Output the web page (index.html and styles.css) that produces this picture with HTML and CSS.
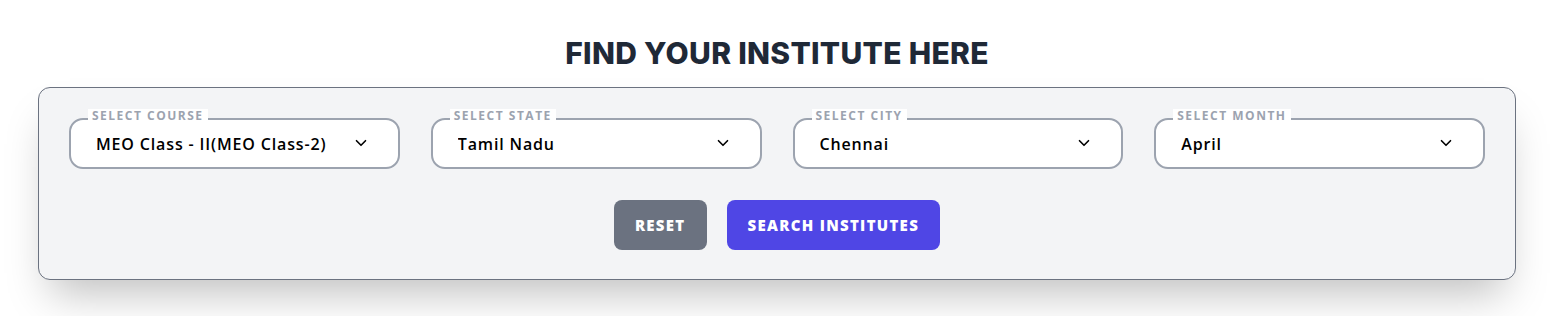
FILE: index.html
```html
<!DOCTYPE html>
<html lang="en">
<head>
    <meta charset="UTF-8">
    <meta name="viewport" content="width=device-width, initial-scale=1.0">
    <title>Find Your Institute</title>
    <link rel="stylesheet" href="styles.css">
</head>
<body>
    <div class="page">
        <h1>FIND YOUR INSTITUTE HERE</h1>
        <form class="search-box" onsubmit="return false;">
            <div class="fields">
                <div class="field">
                    <label for="course">SELECT COURSE</label>
                    <select id="course">
                        <option>MEO Class - II(MEO Class-2)</option>
                    </select>
                    <svg class="chevron" viewBox="0 0 24 24" width="18" height="18"><path d="M6 9l6 6 6-6" fill="none" stroke="#000" stroke-width="2.2" stroke-linecap="round" stroke-linejoin="round"/></svg>
                </div>
                <div class="field">
                    <label for="state">SELECT STATE</label>
                    <select id="state">
                        <option>Tamil Nadu</option>
                    </select>
                    <svg class="chevron" viewBox="0 0 24 24" width="18" height="18"><path d="M6 9l6 6 6-6" fill="none" stroke="#000" stroke-width="2.2" stroke-linecap="round" stroke-linejoin="round"/></svg>
                </div>
                <div class="field">
                    <label for="city">SELECT CITY</label>
                    <select id="city">
                        <option>Chennai</option>
                    </select>
                    <svg class="chevron" viewBox="0 0 24 24" width="18" height="18"><path d="M6 9l6 6 6-6" fill="none" stroke="#000" stroke-width="2.2" stroke-linecap="round" stroke-linejoin="round"/></svg>
                </div>
                <div class="field">
                    <label for="month">SELECT MONTH</label>
                    <select id="month">
                        <option>April</option>
                    </select>
                    <svg class="chevron" viewBox="0 0 24 24" width="18" height="18"><path d="M6 9l6 6 6-6" fill="none" stroke="#000" stroke-width="2.2" stroke-linecap="round" stroke-linejoin="round"/></svg>
                </div>
            </div>
            <div class="actions">
                <button type="reset" class="btn reset">RESET</button>
                <button type="submit" class="btn search">SEARCH INSTITUTES</button>
            </div>
        </form>
    </div>
</body>
</html>
```

FILE: styles.css
```css
body {
    margin: 0;
    background-color: #ffffff;
    font-family: 'Open Sans', 'Liberation Sans', sans-serif;
}

.page {
    padding: 35px 40px 36px 38px;
}

h1 {
    margin: 0 0 16px 0;
    text-align: center;
    font-family: 'Inter', 'Open Sans', sans-serif;
    font-size: 30px;
    font-weight: 800;
    letter-spacing: 0.3px;
    line-height: 36px;
    color: #1f2937;
}

.search-box {
    background-color: #f3f4f6;
    border: 1px solid #6b7280;
    border-radius: 12px;
    padding: 30px 30px 29px 30px;
    box-shadow: 0 25px 40px -12px rgba(0, 0, 0, 0.25);
}

.fields {
    display: grid;
    grid-template-columns: repeat(4, 1fr);
    gap: 31px;
}

.field {
    position: relative;
}

.field label {
    position: absolute; /* 枠線の上に重ねる */
    top: -9px;
    left: 19px;
    padding: 0 4px;
    background-color: #ffffff;
    font-size: 12px;
    font-weight: 700;
    letter-spacing: 1.5px;
    line-height: 13px;
    color: #9ca3af;
}

.field select {
    appearance: none;
    -webkit-appearance: none;
    width: 100%;
    height: 51px;
    padding: 0 40px 0 25px;
    border: 2px solid #9ca3af;
    border-radius: 14px;
    background-color: #ffffff;
    font-family: inherit;
    font-size: 16px;
    font-weight: 600;
    letter-spacing: 0.85px;
    color: #000000;
}

.field .chevron {
    position: absolute;
    right: 30px;
    top: 16px;
    pointer-events: none;
}

.actions {
    display: flex;
    justify-content: center;
    gap: 20px;
    margin-top: 31px;
}

.btn {
    height: 50px;
    padding: 0 21px;
    border: none;
    border-radius: 8px;
    font-family: inherit;
    font-size: 15px;
    font-weight: 800;
    letter-spacing: 1.3px;
    color: #ffffff;
    cursor: pointer;
}

.btn.reset {
    background-color: #6b7280;
}

.btn.search {
    background-color: #4f46e5;
}
```
